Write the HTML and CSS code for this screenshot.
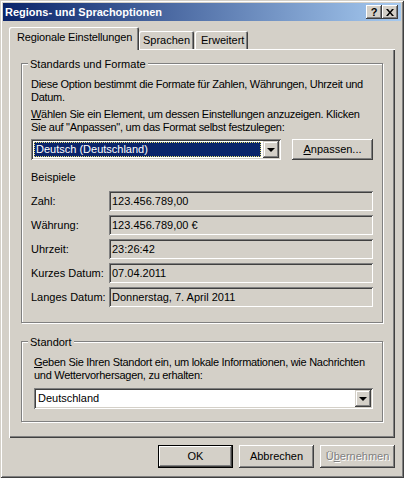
FILE: index.html
```html
<!DOCTYPE html>
<html>

<head>
    <title>Regions- und Sprachoptionen</title>
    <link rel="stylesheet" href="styles.css">
</head>

<body>
    <div class="window">
        <div class="titlebar">
            <span class="title">Regions- und Sprachoptionen</span>
            <div class="caption-buttons">
                <span class="cap-btn">?</span>
                <span class="cap-btn">
                    <svg width="8" height="7" viewBox="0 0 8 7">
                        <path d="M0 0h2l2 2.5 2-2.5h2l-3 3.5 3 3.5h-2l-2-2.5-2 2.5h-2l3-3.5z" fill="#000"/>
                    </svg>
                </span>
            </div>
        </div>

        <div class="tabs">
            <div class="tab active">Regionale Einstellungen</div>
            <div class="tab tab-lang">Sprachen</div>
            <div class="tab tab-adv">Erweitert</div>
        </div>

        <div class="panel">
            <div class="group group-formats">
                <span class="group-label">Standards und Formate</span>
                <p>Diese Option bestimmt die Formate für Zahlen, Währungen, Uhrzeit und<br>Datum.</p>
                <p class="hint"><u>W</u>ählen Sie ein Element, um dessen Einstellungen anzuzeigen. Klicken<br>Sie auf "Anpassen", um das Format selbst festzulegen:</p>
                <div class="format-row">
                    <div class="combo combo-format">
                        <span class="combo-value selected">Deutsch (Deutschland)</span>
                        <span class="combo-arrow"><span class="arrow"></span></span>
                    </div>
                    <button class="btn btn-custom"><u>A</u>npassen...</button>
                </div>
                <div class="examples-title">Beispiele</div>
                <div class="examples">
                    <div class="example"><span class="ex-label">Zahl:</span><span class="field">123.456.789,00</span></div>
                    <div class="example"><span class="ex-label">Währung:</span><span class="field">123.456.789,00 €</span></div>
                    <div class="example"><span class="ex-label">Uhrzeit:</span><span class="field">23:26:42</span></div>
                    <div class="example"><span class="ex-label">Kurzes Datum:</span><span class="field">07.04.2011</span></div>
                    <div class="example"><span class="ex-label">Langes Datum:</span><span class="field">Donnerstag, 7. April 2011</span></div>
                </div>
            </div>

            <div class="group group-location">
                <span class="group-label">Standort</span>
                <p><u>G</u>eben Sie Ihren Standort ein, um lokale Informationen, wie Nachrichten<br>und Wettervorhersagen, zu erhalten:</p>
                <div class="combo combo-location">
                    <span class="combo-value">Deutschland</span>
                    <span class="combo-arrow"><span class="arrow"></span></span>
                </div>
            </div>
        </div>

        <div class="actions">
            <button class="btn btn-action default">OK</button>
            <button class="btn btn-action">Abbrechen</button>
            <button class="btn btn-action disabled">Ü<u>b</u>ernehmen</button>
        </div>
    </div>
</body>

</html>
```

FILE: styles.css
```css
body {
    margin: 0;
    background: #d4d0c8;
    font-family: "Liberation Sans", Arial, sans-serif;
    font-size: 11px;
    line-height: 13px;
    color: #000;
}

.window {
    width: 404px;
    height: 478px;
    box-sizing: border-box;
    padding: 3px;
    background: #d4d0c8;
    box-shadow: inset 1px 1px #d4d0c8, inset -1px -1px #404040, inset 2px 2px #fff, inset -2px -2px #808080;
}

/* title bar */
.titlebar {
    height: 18px;
    display: flex;
    align-items: center;
    padding-left: 2px;
    background: linear-gradient(to right, #0a246a, #a6caf0);
}

.title {
    color: #fff;
    font-weight: bold;
}

.caption-buttons {
    margin-left: auto;
    margin-right: 3px;
    display: flex;
}

.cap-btn {
    width: 16px;
    height: 14px;
    display: flex;
    align-items: center;
    justify-content: center;
    background: #d4d0c8;
    font-weight: bold;
    font-size: 11px;
    box-shadow: inset -1px -1px #404040, inset 1px 1px #fff, inset -2px -2px #808080;
}

/* tabs */
.tabs {
    display: flex;
    align-items: flex-end;
    height: 22px;
    margin-top: 6px;
    padding-left: 6px;
}

.tab {
    height: 18px;
    box-sizing: border-box;
    padding: 3px 0 0 4px;
    border-radius: 2px 2px 0 0;
    background: #d4d0c8;
    box-shadow: inset 1px 1px #fff, inset -1px 0 #404040, inset -2px 0 #808080;
}

.tab.active {
    position: relative;
    z-index: 1;
    width: 130px;
    height: 23px;
    margin-bottom: -1px;
    padding: 4px 0 0 8px;
    letter-spacing: -0.15px;
}

.tab-lang {
    width: 55px;
}

.tab-adv {
    width: 53px;
    margin-left: 1px;
    padding-left: 6px;
}

/* panel */
.panel {
    height: 389px;
    box-sizing: border-box;
    margin: 0 6px;
    padding: 14px 12px 0;
    box-shadow: inset 1px 1px #fff, inset -1px -1px #404040, inset -2px -2px #808080;
}

.group {
    position: relative;
    border: 1px solid #808080;
    box-shadow: inset 1px 1px #fff, 1px 1px #fff;
}

.group-label {
    position: absolute;
    top: -6px;
    left: 6px;
    padding: 0 2px;
    background: #d4d0c8;
}

.group p {
    margin: 0;
    white-space: nowrap;
    letter-spacing: -0.28px;
}

.group-formats {
    height: 260px;
    box-sizing: border-box;
    padding: 14px 9px 0;
}

.group-formats .hint {
    margin-top: 4px;
}

.format-row {
    display: flex;
    margin-top: 5px;
}

/* combo boxes */
.combo {
    height: 21px;
    box-sizing: border-box;
    padding: 2px;
    display: flex;
    background: #fff;
    box-shadow: inset 1px 1px #808080, inset -1px -1px #fff, inset 2px 2px #404040, inset -2px -2px #d4d0c8;
}

.combo-format {
    width: 250px;
}

.combo-location {
    width: 339px;
    margin-top: 6px;
}

.combo-value {
    flex: 1;
    padding: 2px 0 0 2px;
}

.combo-value.selected {
    margin: 1px 2px 1px 1px;
    padding: 0 0 0 1px;
    line-height: 13px;
    border: 1px dotted #e8e070;
    background: #0a246a;
    color: #fff;
}

.combo-arrow {
    width: 16px;
    height: 17px;
    display: flex;
    align-items: center;
    justify-content: center;
    background: #d4d0c8;
    box-shadow: inset -1px -1px #404040, inset 1px 1px #d4d0c8, inset -2px -2px #808080, inset 2px 2px #fff;
}

.arrow {
    width: 0;
    height: 0;
    border-left: 4px solid transparent;
    border-right: 4px solid transparent;
    border-top: 4px solid #000;
}

/* buttons */
.btn {
    font: inherit;
    color: #000;
    border: 0;
    padding: 0;
    background: #d4d0c8;
    box-shadow: inset -1px -1px #404040, inset 1px 1px #fff, inset -2px -2px #808080;
}

.btn-custom {
    width: 81px;
    height: 21px;
    margin-left: 11px;
}

.btn-action {
    width: 75px;
    height: 23px;
}

.btn.default {
    box-shadow: inset 0 0 0 1px #000, inset -2px -2px #404040, inset 2px 2px #fff, inset -3px -3px #808080;
}

.btn.disabled {
    color: #808080;
    text-shadow: 1px 1px #fff;
}

/* examples */
.examples-title {
    margin-top: 11px;
}

.examples {
    display: flex;
    flex-direction: column;
    gap: 4px;
    margin-top: 7px;
}

.example {
    display: flex;
    align-items: center;
}

.ex-label {
    width: 78px;
}

.field {
    width: 264px;
    height: 20px;
    box-sizing: border-box;
    padding: 4px 0 0 3px;
    box-shadow: inset 1px 1px #808080, inset -1px -1px #fff, inset 2px 2px #404040, inset -2px -2px #d4d0c8;
}

.group-location {
    height: 81px;
    box-sizing: border-box;
    margin-top: 18px;
    padding: 14px 9px 0 12px;
}

.actions {
    display: flex;
    justify-content: flex-end;
    gap: 6px;
    margin: 7px 6px 0;
}
```
